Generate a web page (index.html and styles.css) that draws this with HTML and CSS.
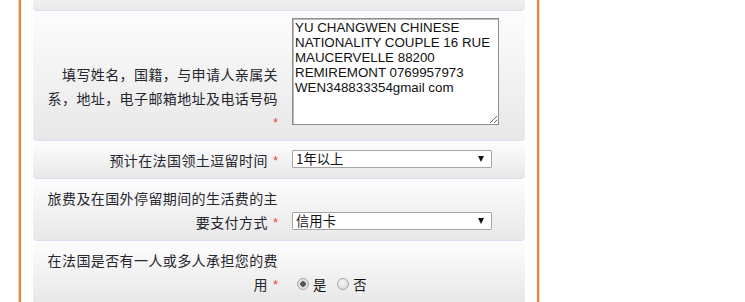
FILE: index.html
```html
<!DOCTYPE html>
<html lang="zh">
<head>
<meta charset="utf-8">
<title>表格</title>
<link rel="stylesheet" href="styles.css">
</head>
<body>
<div class="panel">
  <div class="row row-cut"></div>

  <div class="row">
    <div class="label">填写姓名，国籍，与申请人亲属关系，地址，电子邮箱地址及电话号码 <span class="req">*</span></div>
    <div class="field field-area">
      <textarea class="area">YU CHANGWEN CHINESE NATIONALITY COUPLE 16 RUE MAUCERVELLE 88200 REMIREMONT 0769957973 WEN348833354gmail com</textarea>
    </div>
  </div>

  <div class="row">
    <div class="label">预计在法国领土逗留时间 <span class="req">*</span></div>
    <div class="field">
      <span class="select-wrap">
        <select class="select"><option>1年以上</option></select>
      </span>
    </div>
  </div>

  <div class="row">
    <div class="label">旅费及在国外停留期间的生活费的主要支付方式 <span class="req">*</span></div>
    <div class="field">
      <span class="select-wrap">
        <select class="select"><option>信用卡</option></select>
      </span>
    </div>
  </div>

  <div class="row">
    <div class="label">在法国是否有一人或多人承担您的费用 <span class="req">*</span></div>
    <div class="field">
      <div class="radios">
        <label class="radio"><input type="radio" name="cost" checked><span>是</span></label>
        <label class="radio"><input type="radio" name="cost"><span>否</span></label>
      </div>
    </div>
  </div>
</div>
</body>
</html>
```

FILE: styles.css
```css
html, body {
  margin: 0;
  padding: 0;
  background: #ffffff;
}

body {
  font-family: "Noto Sans CJK SC", "Noto Sans", sans-serif;
  color: #26262e;
}

.panel {
  box-sizing: border-box;
  width: 520px;
  height: 302px;
  margin-left: 19px;
  padding: 0 12px;
  border-left: 2px solid #fb7d2c;
  border-right: 2px solid #fb7d2c;
  box-shadow: -1px 0 0 #dadada, 1px 0 0 #dadada;
  overflow: hidden;
}

.row {
  display: flex;
  align-items: flex-end;
  padding: 5px 0 6px;
  margin-bottom: 2px;
  border-bottom: 1px solid #dcdcef;
  border-radius: 4px;
  background: linear-gradient(#fcfcfc, #e8e8e8);
}

.row-cut {
  height: 0;
  padding: 0 0 10px;
  border-radius: 0 0 4px 4px;
  background: linear-gradient(#f0f0f0, #eaeaea);
}

.label {
  box-sizing: border-box;
  width: 245px;
  flex: none;
  padding-left: 8px;
  text-align: right;
  font-size: 14px;
  letter-spacing: 0.4px;
  line-height: 24px;
}

.req {
  display: inline-block;
  margin-left: 2px;
  color: #ee3333;
  font-size: 12px;
  line-height: 0;
  letter-spacing: 0;
  font-family: "Liberation Sans", sans-serif;
  position: relative;
  top: -1px;
}

.field {
  margin-left: 14px;
  flex: none;
}

.area {
  display: block;
  box-sizing: border-box;
  width: 207px;
  height: 107px;
  margin: 0 0 9px;
  padding: 1px 2px;
  border: 1px solid #8d8d8d;
  box-shadow: inset 1px 1px 0 #bdbdbd;
  background: #fff;
  color: #111;
  font-family: "Liberation Sans", Arial, sans-serif;
  font-size: 13.33px;
  line-height: 15px;
  resize: vertical;
  overflow: hidden;
}

.select-wrap {
  position: relative;
  display: block;
  width: 200px;
  margin-bottom: 4px;
}

.select-wrap::after {
  content: "";
  position: absolute;
  right: 8px;
  top: 6px;
  border-left: 3.5px solid transparent;
  border-right: 3.5px solid transparent;
  border-top: 6px solid #111;
  pointer-events: none;
}

.select {
  display: block;
  box-sizing: border-box;
  width: 200px;
  height: 18px;
  margin: 0;
  padding: 0 0 0 3px;
  border: 1px solid #a6a6a6;
  border-radius: 1px;
  background: #fff;
  color: #111;
  font-family: "Noto Sans CJK SC", sans-serif;
  font-size: 13.33px;
  line-height: 16px;
  -webkit-appearance: none;
  appearance: none;
}

.radios {
  display: flex;
  align-items: center;
  height: 24px;
  padding-left: 5px;
  gap: 11px;
  font-size: 13.33px;
}

.radio {
  display: flex;
  align-items: center;
  gap: 4px;
  color: #111;
}

.radio input {
  -webkit-appearance: none;
  appearance: none;
  box-sizing: border-box;
  width: 12px;
  height: 12px;
  margin: 0;
  border: 1px solid #a8a8a8;
  border-radius: 50%;
  background: radial-gradient(circle at 40% 35%, #f6f6f6, #d2d2d2);
}

.radio input:checked {
  background: radial-gradient(circle, #555 0, #555 2.5px, #dcdcdc 3px, #e8e8e8 100%);
}
```
